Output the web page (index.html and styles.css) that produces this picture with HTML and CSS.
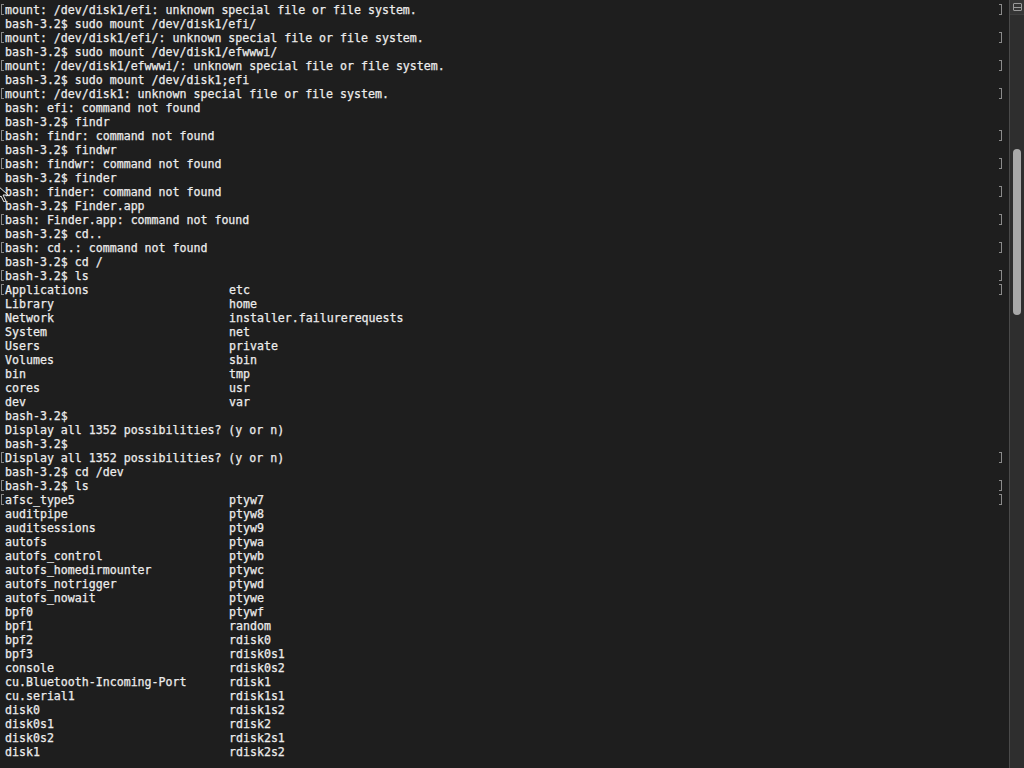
FILE: index.html
```html
<!DOCTYPE html>
<html>
<head>
<meta charset="utf-8">
<link rel="stylesheet" href="styles.css">
</head>
<body>
<div class="window">
  <main class="term">
    <div class="line marked"><span class="mk-l"></span><span class="txt">mount: /dev/disk1/efi: unknown special file or file system.</span><span class="mk-r"></span></div>
    <div class="line"><span class="txt">bash-3.2$ sudo mount /dev/disk1/efi/</span></div>
    <div class="line marked"><span class="mk-l"></span><span class="txt">mount: /dev/disk1/efi/: unknown special file or file system.</span><span class="mk-r"></span></div>
    <div class="line"><span class="txt">bash-3.2$ sudo mount /dev/disk1/efwwwi/</span></div>
    <div class="line marked"><span class="mk-l"></span><span class="txt">mount: /dev/disk1/efwwwi/: unknown special file or file system.</span><span class="mk-r"></span></div>
    <div class="line"><span class="txt">bash-3.2$ sudo mount /dev/disk1;efi</span></div>
    <div class="line marked"><span class="mk-l"></span><span class="txt">mount: /dev/disk1: unknown special file or file system.</span><span class="mk-r"></span></div>
    <div class="line"><span class="txt">bash: efi: command not found</span></div>
    <div class="line"><span class="txt">bash-3.2$ findr</span></div>
    <div class="line marked"><span class="mk-l"></span><span class="txt">bash: findr: command not found</span><span class="mk-r"></span></div>
    <div class="line"><span class="txt">bash-3.2$ findwr</span></div>
    <div class="line marked"><span class="mk-l"></span><span class="txt">bash: findwr: command not found</span><span class="mk-r"></span></div>
    <div class="line"><span class="txt">bash-3.2$ finder</span></div>
    <div class="line marked"><span class="txt">bash: finder: command not found</span><span class="mk-r"></span></div>
    <div class="line"><span class="txt">bash-3.2$ Finder.app</span></div>
    <div class="line marked"><span class="mk-l"></span><span class="txt">bash: Finder.app: command not found</span><span class="mk-r"></span></div>
    <div class="line"><span class="txt">bash-3.2$ cd..</span></div>
    <div class="line marked"><span class="mk-l"></span><span class="txt">bash: cd..: command not found</span><span class="mk-r"></span></div>
    <div class="line"><span class="txt">bash-3.2$ cd /</span></div>
    <div class="line marked"><span class="mk-l"></span><span class="txt">bash-3.2$ ls</span><span class="mk-r"></span></div>
    <div class="line marked"><span class="mk-l"></span><span class="txt cols"><span>Applications</span><span>etc</span></span><span class="mk-r"></span></div>
    <div class="line"><span class="txt cols"><span>Library</span><span>home</span></span></div>
    <div class="line"><span class="txt cols"><span>Network</span><span>installer.failurerequests</span></span></div>
    <div class="line"><span class="txt cols"><span>System</span><span>net</span></span></div>
    <div class="line"><span class="txt cols"><span>Users</span><span>private</span></span></div>
    <div class="line"><span class="txt cols"><span>Volumes</span><span>sbin</span></span></div>
    <div class="line"><span class="txt cols"><span>bin</span><span>tmp</span></span></div>
    <div class="line"><span class="txt cols"><span>cores</span><span>usr</span></span></div>
    <div class="line"><span class="txt cols"><span>dev</span><span>var</span></span></div>
    <div class="line"><span class="txt">bash-3.2$</span></div>
    <div class="line"><span class="txt">Display all 1352 possibilities? (y or n)</span></div>
    <div class="line"><span class="txt">bash-3.2$</span></div>
    <div class="line marked"><span class="mk-l"></span><span class="txt">Display all 1352 possibilities? (y or n)</span><span class="mk-r"></span></div>
    <div class="line"><span class="txt">bash-3.2$ cd /dev</span></div>
    <div class="line marked"><span class="mk-l"></span><span class="txt">bash-3.2$ ls</span><span class="mk-r"></span></div>
    <div class="line marked"><span class="mk-l"></span><span class="txt cols"><span>afsc_type5</span><span>ptyw7</span></span><span class="mk-r"></span></div>
    <div class="line"><span class="txt cols"><span>auditpipe</span><span>ptyw8</span></span></div>
    <div class="line"><span class="txt cols"><span>auditsessions</span><span>ptyw9</span></span></div>
    <div class="line"><span class="txt cols"><span>autofs</span><span>ptywa</span></span></div>
    <div class="line"><span class="txt cols"><span>autofs_control</span><span>ptywb</span></span></div>
    <div class="line"><span class="txt cols"><span>autofs_homedirmounter</span><span>ptywc</span></span></div>
    <div class="line"><span class="txt cols"><span>autofs_notrigger</span><span>ptywd</span></span></div>
    <div class="line"><span class="txt cols"><span>autofs_nowait</span><span>ptywe</span></span></div>
    <div class="line"><span class="txt cols"><span>bpf0</span><span>ptywf</span></span></div>
    <div class="line"><span class="txt cols"><span>bpf1</span><span>random</span></span></div>
    <div class="line"><span class="txt cols"><span>bpf2</span><span>rdisk0</span></span></div>
    <div class="line"><span class="txt cols"><span>bpf3</span><span>rdisk0s1</span></span></div>
    <div class="line"><span class="txt cols"><span>console</span><span>rdisk0s2</span></span></div>
    <div class="line"><span class="txt cols"><span>cu.Bluetooth-Incoming-Port</span><span>rdisk1</span></span></div>
    <div class="line"><span class="txt cols"><span>cu.serial1</span><span>rdisk1s1</span></span></div>
    <div class="line"><span class="txt cols"><span>disk0</span><span>rdisk1s2</span></span></div>
    <div class="line"><span class="txt cols"><span>disk0s1</span><span>rdisk2</span></span></div>
    <div class="line"><span class="txt cols"><span>disk0s2</span><span>rdisk2s1</span></span></div>
    <div class="line"><span class="txt cols"><span>disk1</span><span>rdisk2s2</span></span></div>
    <svg class="pointer" width="12" height="18" viewBox="0 0 12 18"><path d="M-3 1 L8 11 L3 11 L6 17 L4 18 L1 12 L-3 15 Z" fill="#111" stroke="#eee" stroke-width="1"/></svg>
  </main>
  <aside class="scroll">
    <div class="split"><span class="split-ico"></span></div>
    <div class="track"><div class="thumb"></div></div>
  </aside>
</div>
</body>
</html>
```

FILE: styles.css
```css
html, body {
  margin: 0;
  padding: 0;
  background: #1e1e1e;
  width: 1024px;
  height: 768px;
  overflow: hidden;
}
.window {
  display: flex;
  width: 1024px;
  height: 768px;
}
.term {
  position: relative;
  flex: 1;
  padding: 3px 0 0 0;
  font-family: "DejaVu Sans Mono", "Liberation Mono", monospace;
  font-size: 11.6px;
  line-height: 14px;
  color: #ececec;
  -webkit-text-stroke: 0.25px #ececec;
  overflow: hidden;
}
.line {
  position: relative;
  display: flex;
  height: 14px;
  padding-left: 5px;
  white-space: pre;
}
.txt { flex: 1; }
.cols {
  display: grid;
  grid-template-columns: 224px 1fr;
}
.mk-l, .mk-r {
  position: absolute;
  top: 1px;
  width: 2px;
  height: 9px;
  border: 1px solid #8a8a8a;
}
.mk-l {
  left: 1px;
  border-right: none;
}
.mk-r {
  right: 7px;
  border-left: none;
}
.pointer {
  position: absolute;
  left: 0;
  top: 184px;
}
.scroll {
  width: 14px;
  background: #2e2e2e;
  border-left: 1px solid #4a4a4a;
  display: flex;
  flex-direction: column;
}
.split {
  height: 14px;
  background: #353535;
  border-bottom: 1px solid #3e3e3e;
  display: flex;
  align-items: center;
  justify-content: center;
}
.split-ico {
  width: 7px;
  height: 6px;
  border: 1px solid #9a9a9a;
  border-radius: 1px;
  background: linear-gradient(#9a9a9a, #9a9a9a) center / 100% 1px no-repeat;
}
.track {
  flex: 1;
  padding: 134px 3px 0 3px;
}
.thumb {
  height: 166px;
  border-radius: 4px;
  background: #a9a9a9;
}
```
